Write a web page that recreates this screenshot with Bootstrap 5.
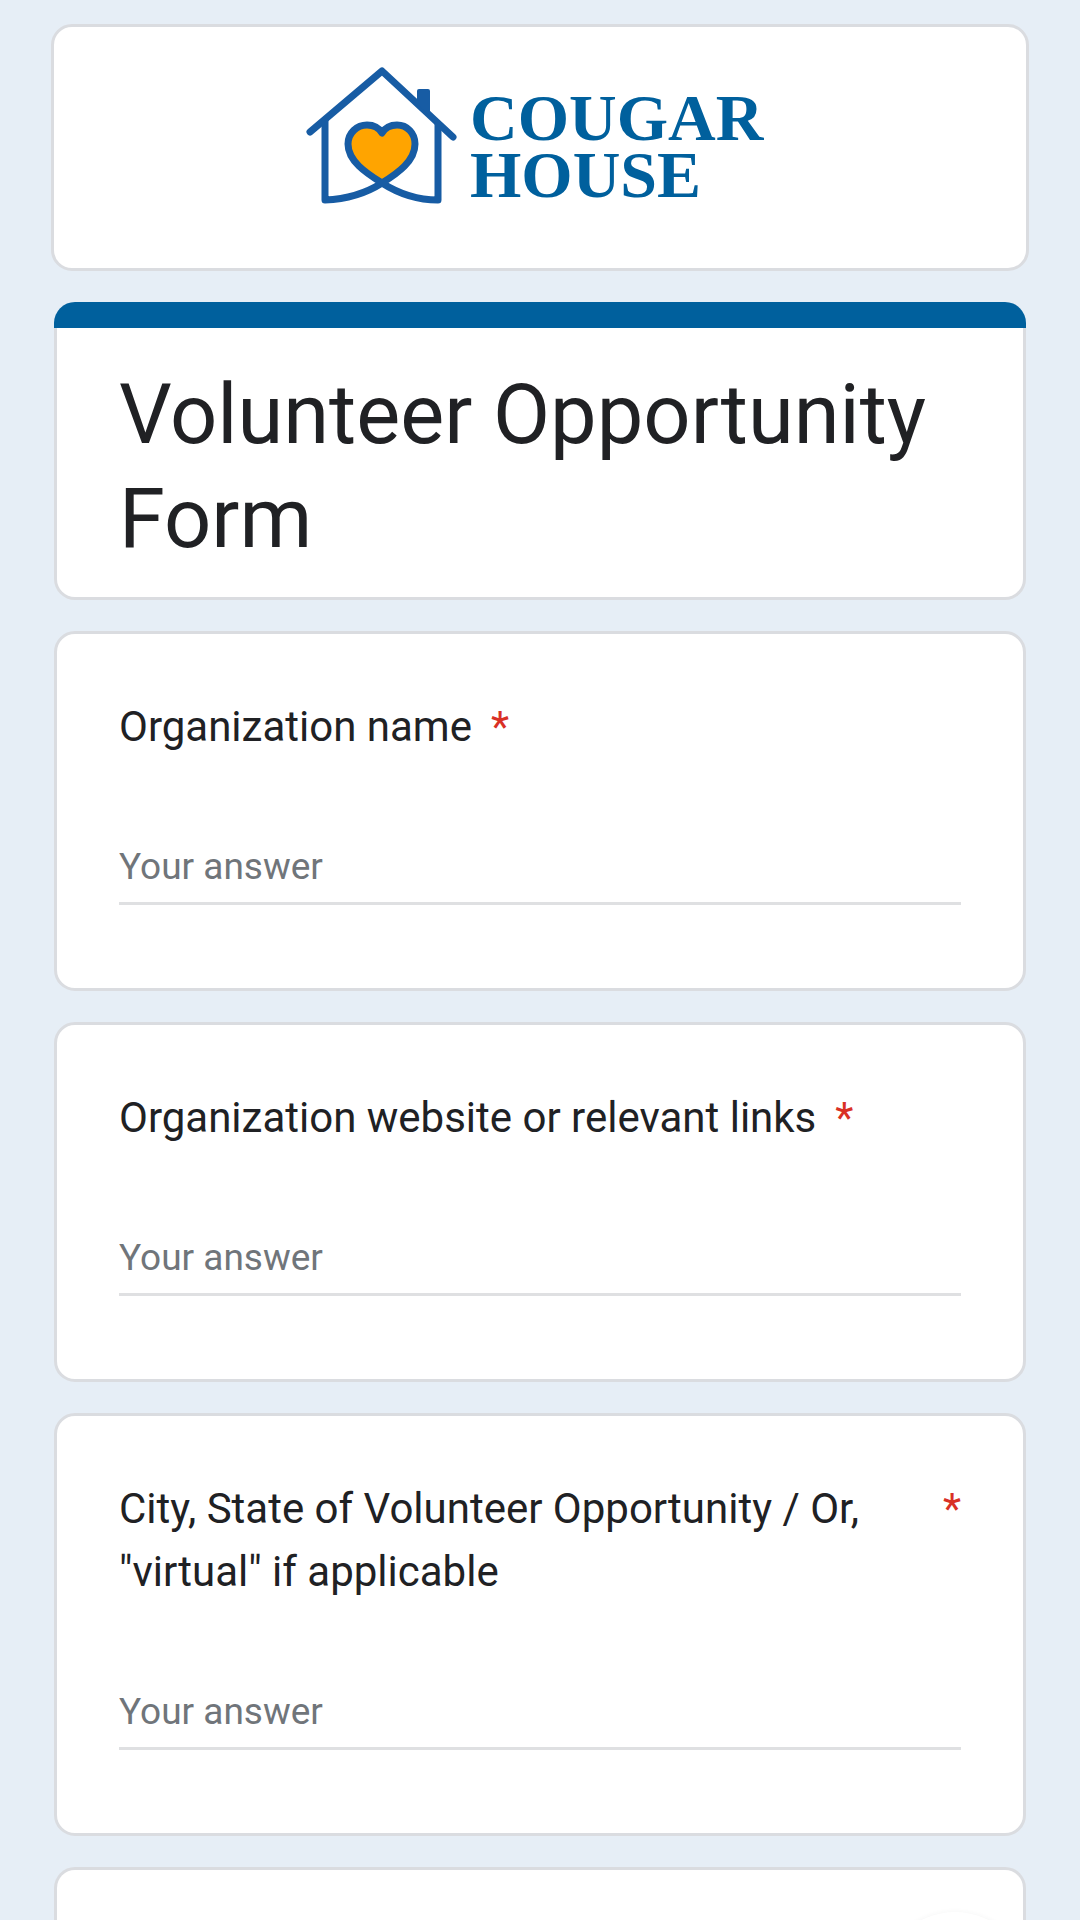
<!DOCTYPE html>
<html lang="en">
<head>
<meta charset="utf-8">
<meta name="viewport" content="width=device-width, initial-scale=1">
<title>Volunteer Opportunity Form</title>
<link href="https://cdn.jsdelivr.net/npm/bootstrap@5.3.0/dist/css/bootstrap.min.css" rel="stylesheet">
<style>
  body { background: #e6eef6; color: #202124; font-family: Roboto, "Noto Sans", sans-serif; }
  .page-shell { padding: 24px 51px 0; gap: 31px; }
  .panel { background: #fff; border: 3px solid #dadce0; border-radius: 21px; }
  .brand-panel { padding: 33px 0 56px; }
  .brand-logo { width: 480px; max-width: 100%; height: auto; }
  .form-stack { gap: 31px; padding: 0 3px; }
  .title-bar { height: 26px; background: #00609d; border-radius: 21px 21px 0 0; }
  .title-body { border-top: 0; border-top-left-radius: 0; border-top-right-radius: 0; padding: 35px 62px 26px; }
  .form-title { font-size: 83px; line-height: 104px; }
  .question { padding: 61px 62px 83px; }
  .question-label { font-size: 42px; line-height: 63px; gap: 19px; margin-bottom: 77px; }
  .required-mark { color: #d93025; }
  .answer { font-size: 37px; line-height: 63px; height: 70px; padding: 0 0 4px; border: 0; border-bottom: 3px solid #dfe0e2; border-radius: 0; color: #202124; }
  .answer::placeholder { color: #70757a; opacity: 1; }
  .answer:focus { box-shadow: none; border-color: #00609d; }
  .next-panel { min-height: 52px; border-bottom: 0; border-bottom-left-radius: 0; border-bottom-right-radius: 0; }
  .edit-fab { right: 50px; bottom: -142px; width: 150px; height: 150px; background: #fff; box-shadow: 0 2px 6px rgba(60, 64, 67, .1); }
</style>
<script src="https://cdn.jsdelivr.net/npm/bootstrap@5.3.0/dist/js/bootstrap.bundle.min.js"></script>
</head>
<body>
<main class="page-shell min-vh-100 d-flex flex-column">
  <header class="panel brand-panel d-flex justify-content-center">
    <svg class="brand-logo" viewBox="0 0 480 152" role="img" aria-label="Cougar House">
      <path d="M82 123C98 113 115 101 115 84C115 73 107 65 97 65C90 65 85 68 82 73C79 68 74 65 67 65C57 65 48 73 48 84C48 101 66 113 82 123Z" fill="#ffa400"/>
      <g fill="none" stroke="#175ca4" stroke-width="7" stroke-linecap="round" stroke-linejoin="round">
        <path d="M10 72L82 11L153 77"/>
        <path d="M25 61V140C50 139 68 132 82 123C98 113 115 101 115 84C115 73 107 65 97 65C90 65 85 68 82 73C79 68 74 65 67 65C57 65 48 73 48 84C48 101 66 113 82 123C96 132 113 140 138 140V64"/>
      </g>
      <path d="M117 31Q117 29 119 29H128Q130 29 130 31V56L117 44Z" fill="#175ca4"/>
      <g fill="#00609d" font-family="'Liberation Serif', serif" font-weight="700" font-size="66">
        <text x="170" y="80">COUGAR</text>
        <text x="170" y="137">HOUSE</text>
      </g>
    </svg>
  </header>

  <form class="form-stack d-flex flex-column flex-grow-1">
    <section>
      <div class="title-bar"></div>
      <div class="panel title-body">
        <h1 class="form-title fw-normal mb-0">Volunteer Opportunity Form</h1>
      </div>
    </section>

    <section class="panel question">
      <label class="question-label d-flex" for="org-name"><span>Organization name</span><span class="required-mark">*</span></label>
      <input class="answer form-control bg-transparent" id="org-name" type="text" placeholder="Your answer" required>
    </section>

    <section class="panel question">
      <label class="question-label d-flex" for="org-links"><span>Organization website or relevant links</span><span class="required-mark">*</span></label>
      <input class="answer form-control bg-transparent" id="org-links" type="text" placeholder="Your answer" required>
    </section>

    <section class="panel question">
      <label class="question-label d-flex" for="org-city"><span>City, State of Volunteer Opportunity / Or, "virtual" if applicable</span><span class="required-mark">*</span></label>
      <input class="answer form-control bg-transparent" id="org-city" type="text" placeholder="Your answer" required>
    </section>

    <section class="panel next-panel flex-grow-1"></section>
  </form>
</main>
<button class="edit-fab btn position-fixed rounded-circle border-0" type="button" aria-label="Edit"></button>
</body>
</html>
